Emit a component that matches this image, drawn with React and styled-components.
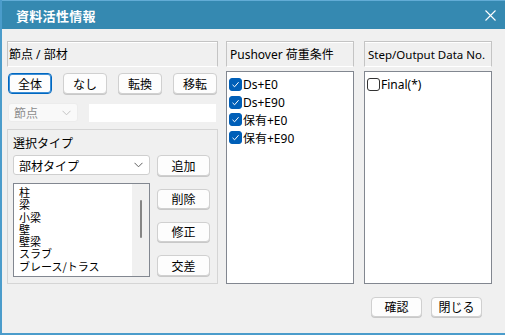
import React from "react";
import styled, { createGlobalStyle } from "styled-components";

const GlobalStyle = createGlobalStyle`
	html, body {
		margin: 0;
		padding: 0;
		background: #f0f0f0;
	}
	body {
		font-family: "Noto Sans", "Noto Sans CJK JP", sans-serif;
		font-size: 12px;
		color: #000;
	}
`;

const Window = styled.div`
	width: 505px;
	height: 335px;
	box-sizing: border-box;
	display: flex;
	flex-direction: column;
	background: #f0f0f0;
	border-left: 2px solid #4b9ccb;
	border-bottom: 2px solid #4b9ccb;
	overflow: hidden;
`;

const TitleBar = styled.div`
	height: 29px;
	margin-left: -2px;
	box-sizing: border-box;
	flex: none;
	display: flex;
	align-items: center;
	justify-content: space-between;
	padding: 0 9px 0 16px;
	background: #3589b1;
	border-top: 1px solid #62acd6;
	color: #fff;
	.title {
		font-family: "Noto Sans CJK JP", sans-serif;
		font-weight: bold;
		font-size: 13px;
		letter-spacing: 0.3px;
	}
`;

const Body = styled.div`
	flex: 1;
	display: flex;
	flex-direction: column;
	padding: 12px 0 0 5px;
`;

const Columns = styled.div`
	display: flex;
	align-items: flex-start;
	.left {
		width: 211px;
		display: flex;
		flex-direction: column;
	}
	.mid {
		width: 128px;
		margin-left: 8px;
		display: flex;
		flex-direction: column;
	}
	.right {
		width: 128px;
		margin-left: 10px;
		display: flex;
		flex-direction: column;
	}
`;

const Header = styled.div`
	height: 26px;
	box-sizing: border-box;
	display: flex;
	align-items: center;
	padding-left: ${props => props.pad || 1}px;
	border: 1px solid #c4c4c4;
	border-bottom-color: #fff;
	box-shadow: inset 0 1px 0 #fff;
	font-size: ${props => props.size || 12}px;
	white-space: nowrap;
`;

const ButtonRow = styled.div`
	display: flex;
	justify-content: space-between;
	margin-top: 6px;
	padding: 0 1px;
`;

const Button = styled.button`
	width: ${props => props.w || 44}px;
	height: ${props => props.h || 21}px;
	padding: 0;
	box-sizing: border-box;
	background: #fdfdfd;
	border: 1px solid ${props => (props.focused ? "#0067c0" : "#d0d0d0")};
	box-shadow: ${props => (props.focused ? "inset 0 0 0 1px #3d8fd6" : "0 1px 0 #c8c8c8")};
	border-radius: 4px;
	font-family: "Noto Sans CJK JP", sans-serif;
	font-size: 12px;
	color: #000;
	line-height: 1;
`;

const FilterRow = styled.div`
	display: flex;
	align-items: center;
	margin-top: 9px;
	padding-left: 1px;
`;

const Combo = styled.div`
	width: ${props => props.w}px;
	height: ${props => props.h || 19}px;
	box-sizing: border-box;
	display: flex;
	align-items: center;
	justify-content: space-between;
	padding: 0 6px 0 5px;
	background: ${props => (props.disabled ? "#f9f9f9" : "#fff")};
	border: 1px solid ${props => (props.disabled ? "#ececec" : "#cfcfcf")};
	border-radius: 3px;
	color: ${props => (props.disabled ? "#8d8d8d" : "#000")};
	font-family: "Noto Sans CJK JP", sans-serif;
	font-size: 12px;
	svg {
		flex: none;
	}
`;

const TextBox = styled.div`
	width: 127px;
	height: 18px;
	margin-left: 11px;
	background: #fff;
`;

const Group = styled.div`
	margin-top: 7px;
	height: 155px;
	box-sizing: border-box;
	border: 1px solid #d5d5d5;
	padding: 4px 7px 0 5px;
	display: flex;
	flex-direction: column;
	.label {
		font-family: "Noto Sans CJK JP", sans-serif;
		font-size: 12px;
		line-height: 17px;
	}
`;

const GroupRow = styled.div`
	display: flex;
	justify-content: space-between;
	align-items: flex-start;
	margin-top: ${props => props.mt || 0}px;
`;

const SideButtons = styled.div`
	display: flex;
	flex-direction: column;
	gap: 13px;
	margin-top: 6px;
`;

const TypeList = styled.div`
	width: 137px;
	height: 94px;
	box-sizing: border-box;
	border: 1px solid #828790;
	background: #fff;
	display: flex;
	.items {
		flex: 1;
		padding: 2px 0 0 5px;
		overflow: hidden;
		font-family: "Noto Sans CJK JP", sans-serif;
		font-size: 11px;
		line-height: 12.3px;
	}
`;

const ScrollTrack = styled.div`
	width: 17px;
	background: #f0f0f0;
	display: flex;
	justify-content: center;
	padding-top: 16px;
	.thumb {
		width: 2px;
		height: 38px;
		background: #858585;
		border-radius: 1px;
	}
`;

const CheckList = styled.div`
	margin-top: 4px;
	height: 213px;
	box-sizing: border-box;
	border: 1px solid #828790;
	background: #fff;
	padding: 4px 0 0 2px;
	display: flex;
	flex-direction: column;
`;

const CheckItem = styled.div`
	display: flex;
	align-items: center;
	height: 17.6px;
	font-size: 12px;
	white-space: nowrap;
	.label {
		margin-left: 1px;
	}
`;

const Box = styled.span`
	width: 13px;
	height: 13px;
	box-sizing: border-box;
	border-radius: 3px;
	display: inline-flex;
	align-items: center;
	justify-content: center;
	background: ${props => (props.checked ? "#005fb8" : "#fff")};
	border: 1px solid ${props => (props.checked ? "#005fb8" : "#333")};
`;

const Footer = styled.div`
	display: flex;
	justify-content: flex-end;
	gap: 9px;
	margin-top: 13px;
	padding-right: 23px;
`;

const Chevron = ({ color }) => (
	<svg width="9" height="6" viewBox="0 0 9 6">
		<path d="M0.5 0.8 L4.5 4.8 L8.5 0.8" fill="none" stroke={color} strokeWidth="1" />
	</svg>
);

const Check = ({ checked, label }) => (
	<CheckItem>
		<Box checked={checked}>
			{checked && (
				<svg width="9" height="9" viewBox="0 0 9 9">
					<path d="M1.5 4.8 L3.6 6.8 L7.6 2.2" fill="none" stroke="#fff" strokeWidth="1" />
				</svg>
			)}
		</Box>
		<span className="label">{label}</span>
	</CheckItem>
);

const types = ["柱", "梁", "小梁", "壁", "壁梁", "スラブ", "ブレース/トラス"];
const loads = ["Ds+E0", "Ds+E90", "保有+E0", "保有+E90"];

const App = () => (
	<>
		<GlobalStyle />
		<Window>
			<TitleBar>
				<span className="title">資料活性情報</span>
				<svg width="11" height="11" viewBox="0 0 11 11">
					<path d="M0.5 0.5 L10.5 10.5 M10.5 0.5 L0.5 10.5" stroke="#fff" strokeWidth="1.1" />
				</svg>
			</TitleBar>
			<Body>
				<Columns>
					<div className="left">
						<Header>節点 / 部材</Header>
						<ButtonRow>
							<Button focused>全体</Button>
							<Button>なし</Button>
							<Button>転換</Button>
							<Button>移転</Button>
						</ButtonRow>
						<FilterRow>
							<Combo w={70} disabled>
								<span>節点</span>
								<Chevron color="#c4c4c4" />
							</Combo>
							<TextBox />
						</FilterRow>
						<Group>
							<span className="label">選択タイプ</span>
							<GroupRow mt={4}>
								<Combo w={137} h={20}>
									<span>部材タイプ</span>
									<Chevron color="#606060" />
								</Combo>
								<Button w={53} h={21}>追加</Button>
							</GroupRow>
							<GroupRow mt={7}>
								<TypeList>
									<div className="items">
										{types.map((t, i) => (
											<div key={i}>{t}</div>
										))}
									</div>
									<ScrollTrack>
										<div className="thumb" />
									</ScrollTrack>
								</TypeList>
								<SideButtons>
									<Button w={53} h={20}>削除</Button>
									<Button w={53} h={20}>修正</Button>
									<Button w={53} h={21}>交差</Button>
								</SideButtons>
							</GroupRow>
						</Group>
					</div>
					<div className="mid">
						<Header pad={3}>Pushover 荷重条件</Header>
						<CheckList>
							{loads.map((l, i) => (
								<Check key={i} checked label={l} />
							))}
						</CheckList>
					</div>
					<div className="right">
						<Header pad={3} size={11.5}>Step/Output Data No.</Header>
						<CheckList>
							<Check label="Final(*)" />
						</CheckList>
					</div>
				</Columns>
				<Footer>
					<Button w={51} h={20}>確認</Button>
					<Button w={51} h={20}>閉じる</Button>
				</Footer>
			</Body>
		</Window>
	</>
);

export default App;
